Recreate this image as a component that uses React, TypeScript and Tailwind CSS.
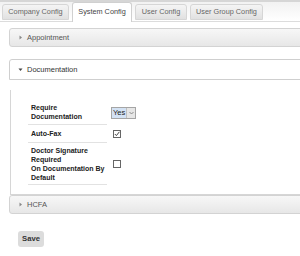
const Caret = ({ open }: { open?: boolean }) =>
  open ? (
    <svg width="5" height="5" viewBox="0 0 5 5" className="shrink-0">
      <polygon points="0.5,1.5 4.5,1.5 2.5,4" fill="#444" />
    </svg>
  ) : (
    <svg width="5" height="5" viewBox="0 0 5 5" className="shrink-0">
      <polygon points="1.5,0.5 4,2.5 1.5,4.5" fill="#888" />
    </svg>
  );

const Check = ({ checked }: { checked?: boolean }) => (
  <div className="ml-[2px] w-[8px] h-[8px] border border-[#666] bg-white flex items-center justify-center">
    {checked && (
      <svg width="6" height="6" viewBox="0 0 6 6">
        <polyline points="0.8,3 2.4,4.6 5.4,0.8" fill="none" stroke="#444" strokeWidth="1" />
      </svg>
    )}
  </div>
);

const tabs = [
  { label: "Company Config", w: "w-[67px]" },
  { label: "System Config", w: "w-[60px]", active: true },
  { label: "User Config", w: "w-[52px]" },
  { label: "User Group Config", w: "w-[73px]" },
];

export default function App() {
  return (
    <div className="w-[300px] h-[256px] overflow-hidden bg-white font-['Liberation_Sans',Arial,sans-serif]">
      <div className="w-[330px]">
        {/* tab strip */}
        <div className="h-[22px] border-t-2 border-[#d6d6d6] border-b border-b-[#dcdcdc] bg-gradient-to-b from-[#f2f2f2] to-white flex items-end pl-[2px] gap-[3px]">
          {tabs.map((t) =>
            t.active ? (
              <div
                key={t.label}
                className={`${t.w} h-[20px] -mb-px bg-white border border-b-0 border-[#d0d0d0] rounded-t-[3px] flex items-center justify-center text-[7.3px] text-[#444]`}
              >
                {t.label}
              </div>
            ) : (
              <div
                key={t.label}
                className={`${t.w} h-[16px] mb-[1px] bg-gradient-to-b from-[#f5f5f5] to-[#e1e1e1] border border-[#d6d6d6] rounded-t-[3px] flex items-center justify-center text-[7.3px] text-[#666]`}
              >
                {t.label}
              </div>
            )
          )}
        </div>

        <div className="pl-[9px]">
          {/* Appointment */}
          <div className="mt-[6px] h-[19px] rounded-[3px] border border-[#d3d3d3] bg-gradient-to-b from-[#f7f7f7] to-[#e7e7e7] flex items-center gap-[4px] pl-[8px] text-[7.5px] text-[#555]">
            <Caret />
            <span>Appointment</span>
          </div>

          {/* Documentation */}
          <div className="mt-[12px] h-[21px] rounded-t-[3px] border border-[#cfcfcf] bg-white flex items-center gap-[4px] pl-[8px] text-[7.5px] text-[#333]">
            <Caret open />
            <span>Documentation</span>
          </div>
          <div className="pt-[10px] ml-px">
            <div className="border-l border-r border-b border-[#d6d6d6] pt-[10px] pb-[9px] pl-[17px]">
              <div className="text-[7px] leading-[9px] font-bold text-[#222]">
                <div className="flex items-center">
                  <div className="w-[79px] pl-[3px] pt-[3px] pb-[3px] border-b border-[#e2e2e2]">
                    Require
                    <br />
                    Documentation
                  </div>
                  <div className="ml-[4px] h-[12px] flex border border-[#a5a5a5] font-normal">
                    <span className="bg-[#d3e2f4] px-[1px] text-[7.5px] leading-[10px] text-[#222]">Yes</span>
                    <span className="w-[9px] bg-[#e6e6e6] border-l border-[#c0c0c0] flex items-center justify-center">
                      <svg width="5" height="4" viewBox="0 0 5 4">
                        <polyline points="0.5,1 2.5,3 4.5,1" fill="none" stroke="#777" strokeWidth="0.8" />
                      </svg>
                    </span>
                  </div>
                </div>
                <div className="flex items-center">
                  <div className="w-[79px] pl-[3px] pt-[4px] pb-[4px] border-b border-[#e2e2e2]">Auto-Fax</div>
                  <div className="ml-[4px]">
                    <Check checked />
                  </div>
                </div>
                <div className="flex items-center">
                  <div className="w-[79px] pl-[3px] pt-[3px] pb-[2px] border-b border-[#e2e2e2]">
                    Doctor Signature
                    <br />
                    Required
                    <br />
                    On Documentation By
                    <br />
                    Default
                  </div>
                  <div className="ml-[4px]">
                    <Check />
                  </div>
                </div>
              </div>
            </div>
          </div>

          {/* HCFA */}
          <div className="h-[19px] rounded-[3px] border border-[#d3d3d3] bg-gradient-to-b from-[#f7f7f7] to-[#e7e7e7] flex items-center gap-[4px] pl-[8px] text-[7.5px] text-[#555]">
            <Caret />
            <span>HCFA</span>
          </div>

          <div className="mt-[17px] ml-[9px] w-[26px] h-[16px] rounded-[3px] bg-[#dcdcdc] flex items-center justify-center text-[7.7px] font-bold text-[#333]">
            Save
          </div>
        </div>
      </div>
    </div>
  );
}
